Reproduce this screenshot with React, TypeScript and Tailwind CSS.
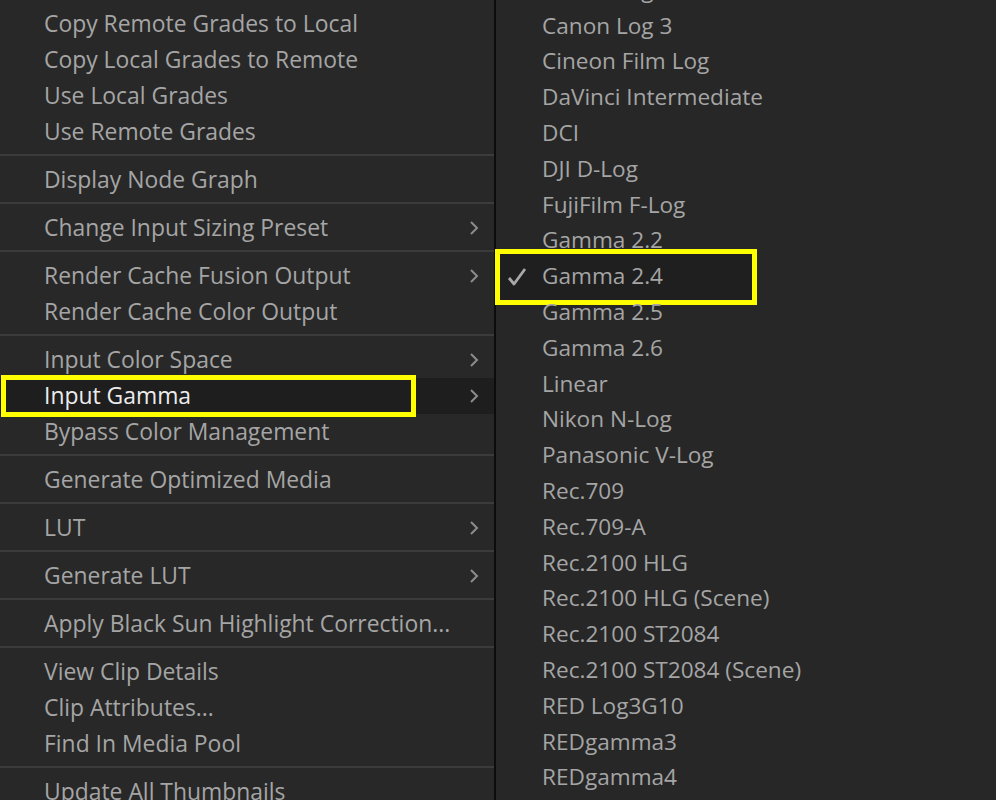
import React from 'react';

type Item = { label: string; sub?: boolean; active?: boolean };

const leftGroups: Item[][] = [
  [
    { label: 'Copy Remote Grades to Local' },
    { label: 'Copy Local Grades to Remote' },
    { label: 'Use Local Grades' },
    { label: 'Use Remote Grades' },
  ],
  [{ label: 'Display Node Graph' }],
  [{ label: 'Change Input Sizing Preset', sub: true }],
  [
    { label: 'Render Cache Fusion Output', sub: true },
    { label: 'Render Cache Color Output' },
  ],
  [
    { label: 'Input Color Space', sub: true },
    { label: 'Input Gamma', sub: true, active: true },
    { label: 'Bypass Color Management' },
  ],
  [{ label: 'Generate Optimized Media' }],
  [{ label: 'LUT', sub: true }],
  [{ label: 'Generate LUT', sub: true }],
  [{ label: 'Apply Black Sun Highlight Correction...' }],
  [
    { label: 'View Clip Details' },
    { label: 'Clip Attributes...' },
    { label: 'Find In Media Pool' },
  ],
  [{ label: 'Update All Thumbnails' }],
];

const gammas = [
  'Canon Log 2',
  'Canon Log 3',
  'Cineon Film Log',
  'DaVinci Intermediate',
  'DCI',
  'DJI D-Log',
  'FujiFilm F-Log',
  'Gamma 2.2',
  'Gamma 2.4',
  'Gamma 2.5',
  'Gamma 2.6',
  'Linear',
  'Nikon N-Log',
  'Panasonic V-Log',
  'Rec.709',
  'Rec.709-A',
  'Rec.2100 HLG',
  'Rec.2100 HLG (Scene)',
  'Rec.2100 ST2084',
  'Rec.2100 ST2084 (Scene)',
  'RED Log3G10',
  'REDgamma3',
  'REDgamma4',
  'S-Log',
];

function Chevron() {
  return (
    <svg width="12" height="16" viewBox="0 0 12 16" className="shrink-0">
      <polyline points="3,2 9,8 3,14" fill="none" stroke="#8c8c8c" strokeWidth="2" />
    </svg>
  );
}

function Check() {
  return (
    <svg width="22" height="22" viewBox="0 0 22 22">
      <polyline
        points="3,12 8,18 19,3"
        fill="none"
        stroke="#a8a8a8"
        strokeWidth="2.8"
        strokeLinejoin="round"
      />
    </svg>
  );
}

function LeftRow({ item }: { item: Item }) {
  return (
    <div
      className={`relative flex items-center h-[36px] pl-[44px] pr-[14px] ${
        item.active ? 'bg-[#1e1e1e] text-[#ececec]' : 'text-[#a5a5a5]'
      }`}
    >
      {item.active && (
        <div className="absolute left-[1px] top-[-3px] w-[415px] h-[42px] border-[5px] border-[#ffff00]" />
      )}
      <span className="relative flex-1 whitespace-nowrap">{item.label}</span>
      {item.sub && <Chevron />}
    </div>
  );
}

export default function App() {
  return (
    <div
      className="flex h-[800px] w-[996px] overflow-hidden bg-[#282828] leading-none"
      style={{ fontFamily: '"Open Sans", "Noto Sans", sans-serif' }}
    >
      <div className="w-[494px] shrink-0 pt-[6px] flex flex-col text-[22.9px]">
        {leftGroups.map((group, gi) => (
          <div key={gi} className="flex flex-col">
            {gi > 0 && <div className="mt-[4px] mb-[6px] h-[2px] bg-[#3b3b3b]" />}
            {group.map((item) => (
              <LeftRow key={item.label} item={item} />
            ))}
          </div>
        ))}
      </div>
      <div className="w-[2px] shrink-0 bg-[#0c0c0c]" />
      <div className="flex-1 flex flex-col mt-[-27.8px] bg-[#272727] text-[22.6px]">
        {gammas.map((g) => {
          const active = g === 'Gamma 2.4';
          return (
            <div
              key={g}
              className="relative flex items-center h-[35.8px] shrink-0 pl-[46px] text-[#a5a5a5]"
            >
              {active && (
                <>
                  <div className="absolute left-[-1px] top-[-10px] w-[262px] h-[56px] border-[5px] border-[#ffff00] bg-[#1f1f1f]" />
                  <div className="absolute left-[10px] top-[7px]">
                    <Check />
                  </div>
                </>
              )}
              <span className="relative whitespace-nowrap">{g}</span>
            </div>
          );
        })}
      </div>
    </div>
  );
}
